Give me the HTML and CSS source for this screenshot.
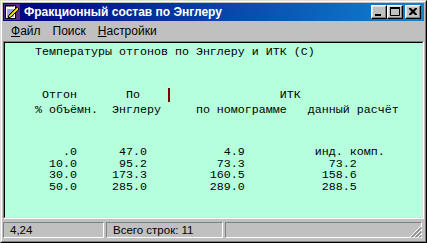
FILE: index.html
```html
<!DOCTYPE html>
<html lang="ru">
<head>
<meta charset="utf-8">
<title>Фракционный состав по Энглеру</title>
<link rel="stylesheet" href="styles.css">
</head>
<body>
<div class="window">
  <div class="frame">
    <div class="titlebar">
      <svg class="app-icon" width="16" height="16" viewBox="0 0 16 16">
        <rect x="0" y="0" width="16" height="16" fill="#5a2a8a"/>
        <rect x="1.5" y="1.5" width="10" height="13" fill="#ffffff" stroke="#000" stroke-width="1"/>
        <path d="M3 1v2M5 1v2M7 1v2M9 1v2" stroke="#000" stroke-width="1"/>
        <path d="M3 6h7M3 8h7M3 10h7M3 12h7" stroke="#3050c0" stroke-width="1"/>
        <path d="M4 14 L5 11 L13 3 L15 5 L7 13 Z" fill="#ffe000" stroke="#000" stroke-width="1" stroke-linejoin="round"/>
        <path d="M6 11 L13.5 3.5" stroke="#c08000" stroke-width="1"/>
      </svg>
      <span class="title">Фракционный состав по Энглеру</span>
      <div class="controls">
        <div class="tbtn">
          <svg width="14" height="12" viewBox="0 0 14 12"><rect x="3" y="8" width="6" height="2" fill="#000"/></svg>
        </div>
        <div class="tbtn">
          <svg width="14" height="12" viewBox="0 0 14 12"><path d="M2.5 1.5h9v8h-9z" fill="none" stroke="#000"/><rect x="2" y="1" width="10" height="2" fill="#000"/></svg>
        </div>
        <div class="tbtn close">
          <svg width="14" height="12" viewBox="0 0 14 12"><path d="M3 2h2l2 2 2-2h2v1l-2.5 2.5 2.5 2.5v1h-2l-2-2-2 2h-2v-1l2.5-2.5-2.5-2.5z" fill="#000"/></svg>
        </div>
      </div>
    </div>
    <div class="menubar">
      <span class="menu-item"><u>Ф</u>айл</span>
      <span class="menu-item">Поиск</span>
      <span class="menu-item"><u>Н</u>астройки</span>
    </div>
    <div class="client">
      <div class="client-inner">
        <div class="line head">Температуры отгонов по Энглеру и ИТК (С)</div>
        <div class="line cols1"> Отгон       По                    ИТК</div>
        <div class="line cols2">% объёмн.  Энглеру     по номограмме   данный расчёт</div>
        <div class="rows">
          <div class="line">    .0      47.0           4.9          инд. комп.</div>
          <div class="line">  10.0      95.2          73.3            73.2</div>
          <div class="line">  30.0     173.3         160.5           158.6</div>
          <div class="line">  50.0     285.0         289.0           288.5</div>
        </div>
        <span class="caret"></span>
      </div>
    </div>
    <div class="statusbar">
      <div class="panel p1">4,24</div>
      <div class="panel p2">Всего строк: 11</div>
      <div class="panel p3">
        <svg class="grip" width="12" height="12" viewBox="0 0 12 12">
          <path d="M11 0L0 11M11 4L4 11M11 8L8 11" stroke="#ffffff" stroke-width="1"/>
          <path d="M11.5 1L1 11.5M11.5 2L2 11.5M11.5 5L5 11.5M11.5 6L6 11.5M11.5 9L9 11.5M11.5 10L10 11.5" stroke="#808080" stroke-width="1"/>
        </svg>
      </div>
    </div>
  </div>
</div>
</body>
</html>
```
FILE: styles.css
```css
* { box-sizing: border-box; }
html, body { margin: 0; padding: 0; background: #c0c0c0; }
body { width: 427px; height: 243px; overflow: hidden; }

.window {
  width: 427px;
  height: 243px;
  border: 1px solid;
  border-color: #dfdfdf #000000 #000000 #dfdfdf;
}
.frame {
  height: 100%;
  border: 1px solid;
  border-color: #ffffff #808080 #808080 #ffffff;
  padding: 1px;
  background: #c0c0c0;
  display: flex;
  flex-direction: column;
}

.titlebar {
  height: 18px;
  flex: none;
  display: flex;
  align-items: center;
  padding: 0 3px 0 1px;
  background: linear-gradient(to right, #000080, #1084d0);
}
.app-icon { flex: none; display: block; }
.title {
  margin-left: 4px;
  color: #ffffff;
  font-family: "Liberation Sans", Arial, sans-serif;
  font-weight: bold;
  font-size: 12px;
  line-height: 14px;
  white-space: nowrap;
}
.controls {
  margin-left: auto;
  display: flex;
  align-items: center;
}
.tbtn {
  width: 16px;
  height: 14px;
  border: 1px solid;
  border-color: #ffffff #000000 #000000 #ffffff;
  background: #c0c0c0;
  box-shadow: inset -1px -1px #808080, inset 1px 1px #dfdfdf;
  display: flex;
}
.tbtn svg { display: block; }
.tbtn.close { margin-left: 2px; }

.menubar {
  height: 20px;
  flex: none;
  display: flex;
  align-items: center;
  padding-left: 2px;
  font-family: "Liberation Sans", Arial, sans-serif;
  font-size: 12px;
  color: #000;
}
.menu-item { padding: 0 6px; line-height: 16px; }
.menu-item u { text-decoration: underline; text-underline-offset: 1px; }

.client {
  height: 178px;
  flex: none;
  border: 1px solid;
  border-color: #808080 #ffffff #ffffff #808080;
}
.client-inner {
  position: relative;
  height: 100%;
  border: 1px solid;
  border-color: #000000 #dfdfdf #dfdfdf #000000;
  background: #b5ffdc;
  padding: 3px 0 0 30px;
  font-family: "Liberation Mono", "Courier New", monospace;
  font-size: 11.67px;
  color: #000;
}
.line { white-space: pre; line-height: 12px; height: 12px; }
.cols1 { margin-top: 31px; }
.cols2 { margin-top: 3px; }
.rows { margin-top: 31px; }
.rows .line { line-height: 11.5px; height: 11.5px; }
.caret {
  position: absolute;
  left: 163px;
  top: 45px;
  width: 2px;
  height: 14px;
  background: #800000;
}

.statusbar {
  height: 21px;
  flex: none;
  display: flex;
  padding: 3px 2px 2px 0;
  font-family: "Liberation Sans", Arial, sans-serif;
  font-size: 11.5px;
  color: #000;
}
.panel {
  height: 16px;
  border: 1px solid;
  border-color: #808080 #ffffff #ffffff #808080;
  padding-left: 6px;
  line-height: 14px;
  white-space: nowrap;
}
.p1 { width: 101px; margin-right: 2px; }
.p2 { width: 117px; margin-right: 2px; }
.p3 { flex: 1; position: relative; }
.grip { position: absolute; right: -1px; bottom: -1px; }
```
